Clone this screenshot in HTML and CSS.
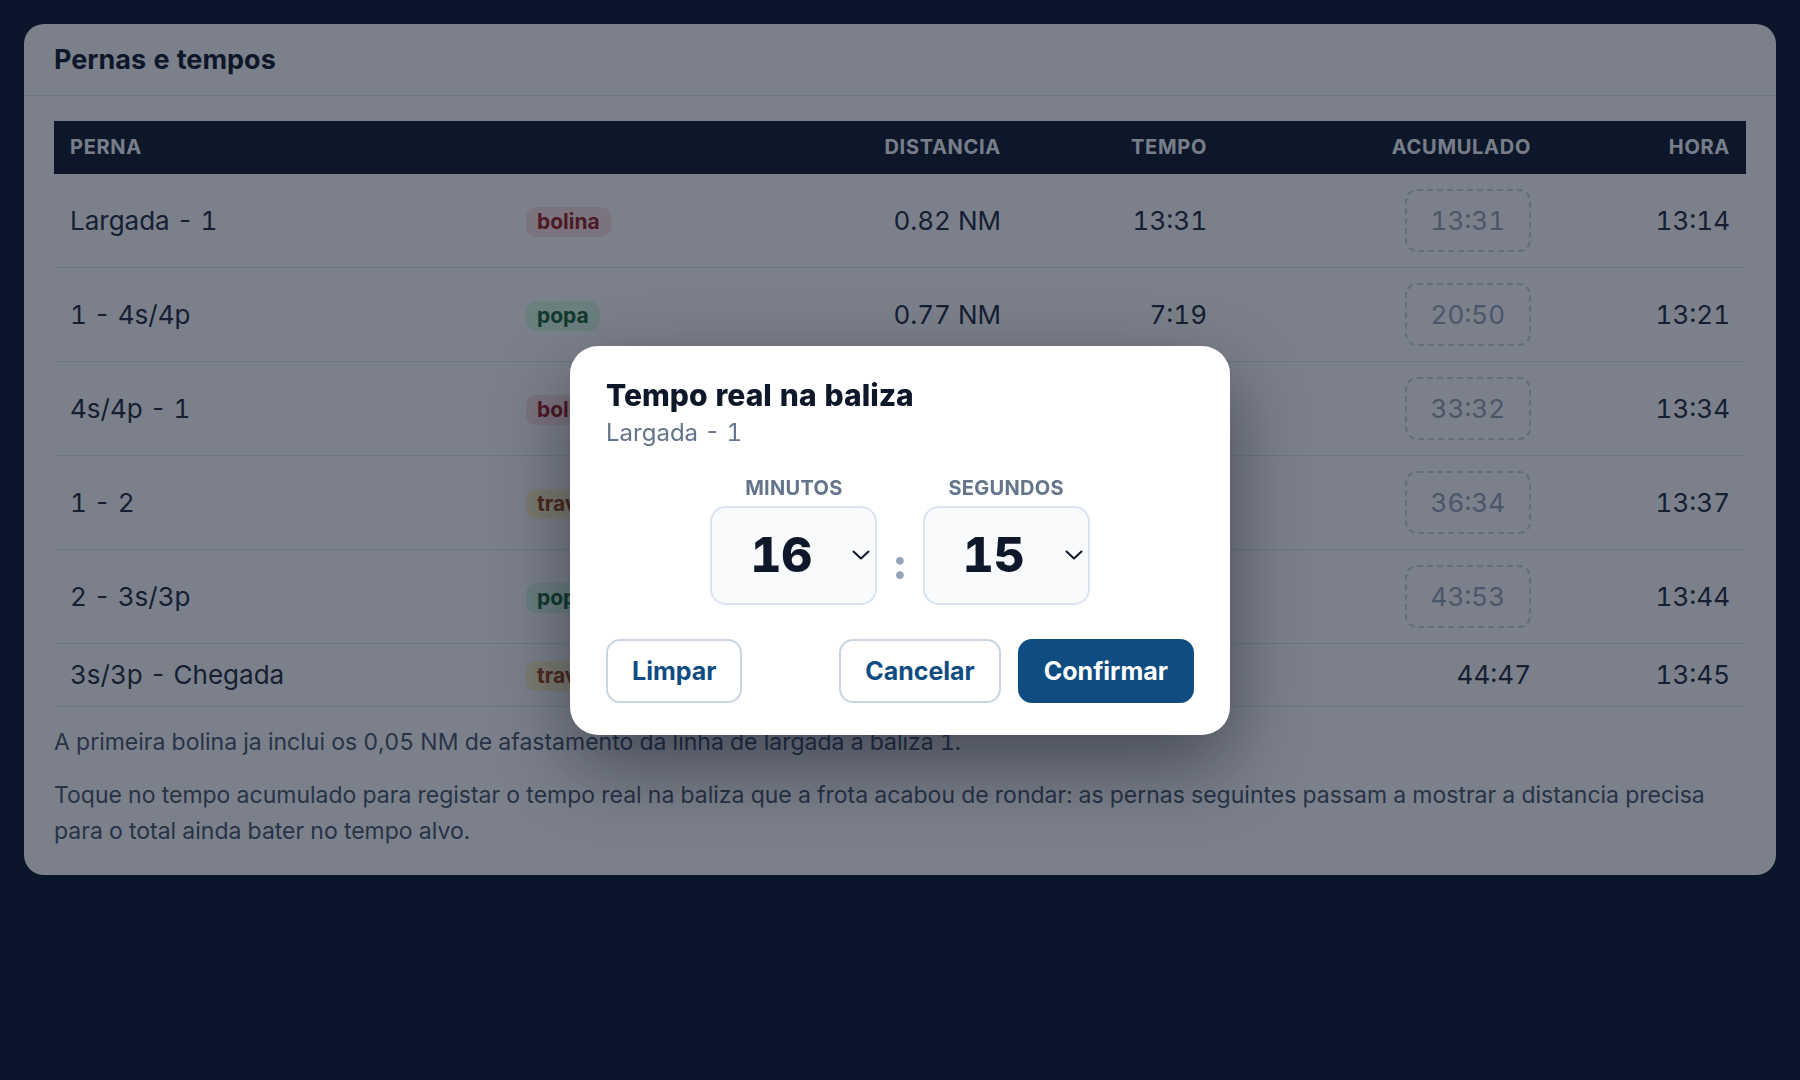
FILE: index.html
```html
<!DOCTYPE html>
<html lang="pt">
<head>
<meta charset="utf-8">
<title>Pernas e tempos</title>
<link rel="stylesheet" href="styles.css">
</head>
<body>
<section class="card">
  <header class="card-head"><h2>Pernas e tempos</h2></header>
  <div class="card-body">
    <table class="legs">
      <thead>
        <tr>
          <th class="c-leg">Perna</th>
          <th class="c-kind"></th>
          <th class="c-dist num">Distancia</th>
          <th class="c-time num">Tempo</th>
          <th class="c-acc num">Acumulado</th>
          <th class="c-hour num">Hora</th>
        </tr>
      </thead>
      <tbody>
        <tr>
          <td>Largada - 1</td>
          <td><span class="badge bolina">bolina</span></td>
          <td class="num">0.82 NM</td>
          <td class="num">13:31</td>
          <td class="num"><button class="acc">13:31</button></td>
          <td class="num">13:14</td>
        </tr>
        <tr>
          <td>1 - 4s/4p</td>
          <td><span class="badge popa">popa</span></td>
          <td class="num">0.77 NM</td>
          <td class="num">7:19</td>
          <td class="num"><button class="acc">20:50</button></td>
          <td class="num">13:21</td>
        </tr>
        <tr>
          <td>4s/4p - 1</td>
          <td><span class="badge bolina">bolina</span></td>
          <td class="num">0.77 NM</td>
          <td class="num">12:42</td>
          <td class="num"><button class="acc">33:32</button></td>
          <td class="num">13:34</td>
        </tr>
        <tr>
          <td>1 - 2</td>
          <td><span class="badge traves">traves</span></td>
          <td class="num">0.30 NM</td>
          <td class="num">3:02</td>
          <td class="num"><button class="acc">36:34</button></td>
          <td class="num">13:37</td>
        </tr>
        <tr>
          <td>2 - 3s/3p</td>
          <td><span class="badge popa">popa</span></td>
          <td class="num">0.77 NM</td>
          <td class="num">7:19</td>
          <td class="num"><button class="acc">43:53</button></td>
          <td class="num">13:44</td>
        </tr>
        <tr>
          <td>3s/3p - Chegada</td>
          <td><span class="badge traves">traves</span></td>
          <td class="num">0.09 NM</td>
          <td class="num">0:54</td>
          <td class="num">44:47</td>
          <td class="num">13:45</td>
        </tr>
      </tbody>
    </table>
    <p class="note">A primeira bolina ja inclui os 0,05 NM de afastamento da linha de largada a baliza 1.</p>
    <p class="note">Toque no tempo acumulado para registar o tempo real na baliza que a frota acabou de rondar: as pernas seguintes passam a mostrar a distancia precisa para o total ainda bater no tempo alvo.</p>
  </div>
</section>

<div class="overlay">
  <div class="modal" role="dialog" aria-modal="true">
    <h3 class="modal-title">Tempo real na baliza</h3>
    <p class="modal-sub">Largada - 1</p>
    <div class="picker">
      <div class="field">
        <span class="lbl">Minutos</span>
        <div class="select">
          <span class="val">16</span>
          <svg class="chev" width="18" height="10" viewBox="0 0 18 10"><polyline points="1.5 1.5 9 8.5 16.5 1.5" fill="none" stroke="#0f172a" stroke-width="2" stroke-linecap="round" stroke-linejoin="round"/></svg>
        </div>
      </div>
      <span class="colon">:</span>
      <div class="field">
        <span class="lbl">Segundos</span>
        <div class="select">
          <span class="val">15</span>
          <svg class="chev" width="18" height="10" viewBox="0 0 18 10"><polyline points="1.5 1.5 9 8.5 16.5 1.5" fill="none" stroke="#0f172a" stroke-width="2" stroke-linecap="round" stroke-linejoin="round"/></svg>
        </div>
      </div>
    </div>
    <div class="actions">
      <button class="btn">Limpar</button>
      <button class="btn push">Cancelar</button>
      <button class="btn primary">Confirmar</button>
    </div>
  </div>
</div>
</body>
</html>
```

FILE: styles.css
```css
* { box-sizing: border-box; }

html, body {
  margin: 0;
  height: 100%;
}

body {
  background: #081328;
  padding: 24px;
  font-family: Inter, "Noto Sans", "Liberation Sans", sans-serif;
  font-variant-numeric: tabular-nums;
  color: #1e293b;
}

.card {
  background: #ffffff;
  border-radius: 20px;
  overflow: hidden;
}

.card-head {
  padding: 20px 30px;
  border-bottom: 1px solid #e2e8f0;
}

.card-head h2 {
  margin: 0;
  font-size: 27px;
  line-height: 31px;
  font-weight: 700;
  color: #0f172a;
}

.card-body {
  padding: 25px 30px 26px;
}

.legs {
  width: 100%;
  border-collapse: collapse;
  table-layout: fixed;
}

.legs th {
  background: #0f172a;
  color: #f8fafc;
  font-size: 20px;
  line-height: 23px;
  font-weight: 700;
  text-transform: uppercase;
  letter-spacing: 0.035em;
  padding: 15px 16px;
  text-align: left;
}

.legs .c-leg { width: 456px; }
.legs .c-kind { width: 250px; }
.legs .c-dist { width: 257px; }
.legs .c-time { width: 206px; }
.legs .c-acc { width: 324px; }
.legs .c-hour { width: 199px; }

.legs td {
  padding: 15px 16px;
  font-size: 26px;
  line-height: 30px;
  color: #1e293b;
  border-bottom: 1px solid #e2e8f0;
  vertical-align: middle;
  white-space: nowrap;
}

.legs th.num, .legs td.num { text-align: right; }

.badge {
  display: inline-block;
  padding: 3px 11px;
  border-radius: 10px;
  font-size: 21px;
  line-height: 24px;
  font-weight: 700;
}

.badge.bolina { background: #fee2e2; color: #991b1b; }
.badge.popa { background: #dcfce7; color: #166534; }
.badge.traves { background: #fef3c7; color: #92400e; }

.acc {
  font-family: inherit;
  font-variant-numeric: tabular-nums;
  font-size: 26px;
  line-height: 30px;
  color: #94a3b8;
  background: transparent;
  border: 2px dashed #cbd5e1;
  border-radius: 12px;
  padding: 14.5px 24px;
  cursor: pointer;
}

.note {
  margin: 17px 0 0;
  font-size: 23px;
  line-height: 36px;
  color: #475569;
}

/* overlay + modal */
.overlay {
  position: fixed;
  inset: 0;
  background: rgba(15, 23, 42, 0.55);
  display: flex;
  align-items: center;
  justify-content: center;
}

.modal {
  width: 660px;
  background: #ffffff;
  border-radius: 28px;
  padding: 31px 36px 32px;
  box-shadow: 0 30px 80px rgba(2, 6, 23, 0.45);
}

.modal-title {
  margin: 0;
  font-size: 30px;
  line-height: 36px;
  font-weight: 800;
  color: #0f172a;
}

.modal-sub {
  margin: 5px 0 0;
  font-size: 24px;
  line-height: 29px;
  color: #64748b;
}

.picker {
  margin-top: 29px;
  display: flex;
  justify-content: center;
  gap: 17px;
}

.field {
  display: flex;
  flex-direction: column;
  align-items: center;
  gap: 6px;
}

.lbl {
  font-size: 20px;
  line-height: 24px;
  font-weight: 700;
  text-transform: uppercase;
  color: #64748b;
  letter-spacing: 0.015em;
}

.select {
  width: 167px;
  height: 99px;
  border: 2px solid #dbe3ee;
  border-radius: 16px;
  background: #f8fafc;
  display: flex;
  align-items: center;
  padding: 0 5px 0 2px;
  gap: 4px;
}

.val {
  flex: 1;
  text-align: center;
  font-size: 48px;
  line-height: 60px;
  font-weight: 800;
  color: #0f172a;
}

.chev { flex: none; }

.colon {
  align-self: flex-end;
  margin-bottom: 20px;
  font-size: 42px;
  line-height: 42px;
  font-weight: 800;
  color: #94a3b8;
}

.actions {
  margin-top: 34px;
  display: flex;
  gap: 17px;
}

.btn {
  font-family: inherit;
  font-size: 25px;
  line-height: 30px;
  font-weight: 700;
  padding: 15px 24px;
  border-radius: 14px;
  border: 2px solid #cbd5e1;
  background: #ffffff;
  color: #0f4c81;
  cursor: pointer;
}

.btn.push { margin-left: auto; }

.btn.primary {
  background: #0f4c81;
  border-color: #0f4c81;
  color: #ffffff;
}
```
